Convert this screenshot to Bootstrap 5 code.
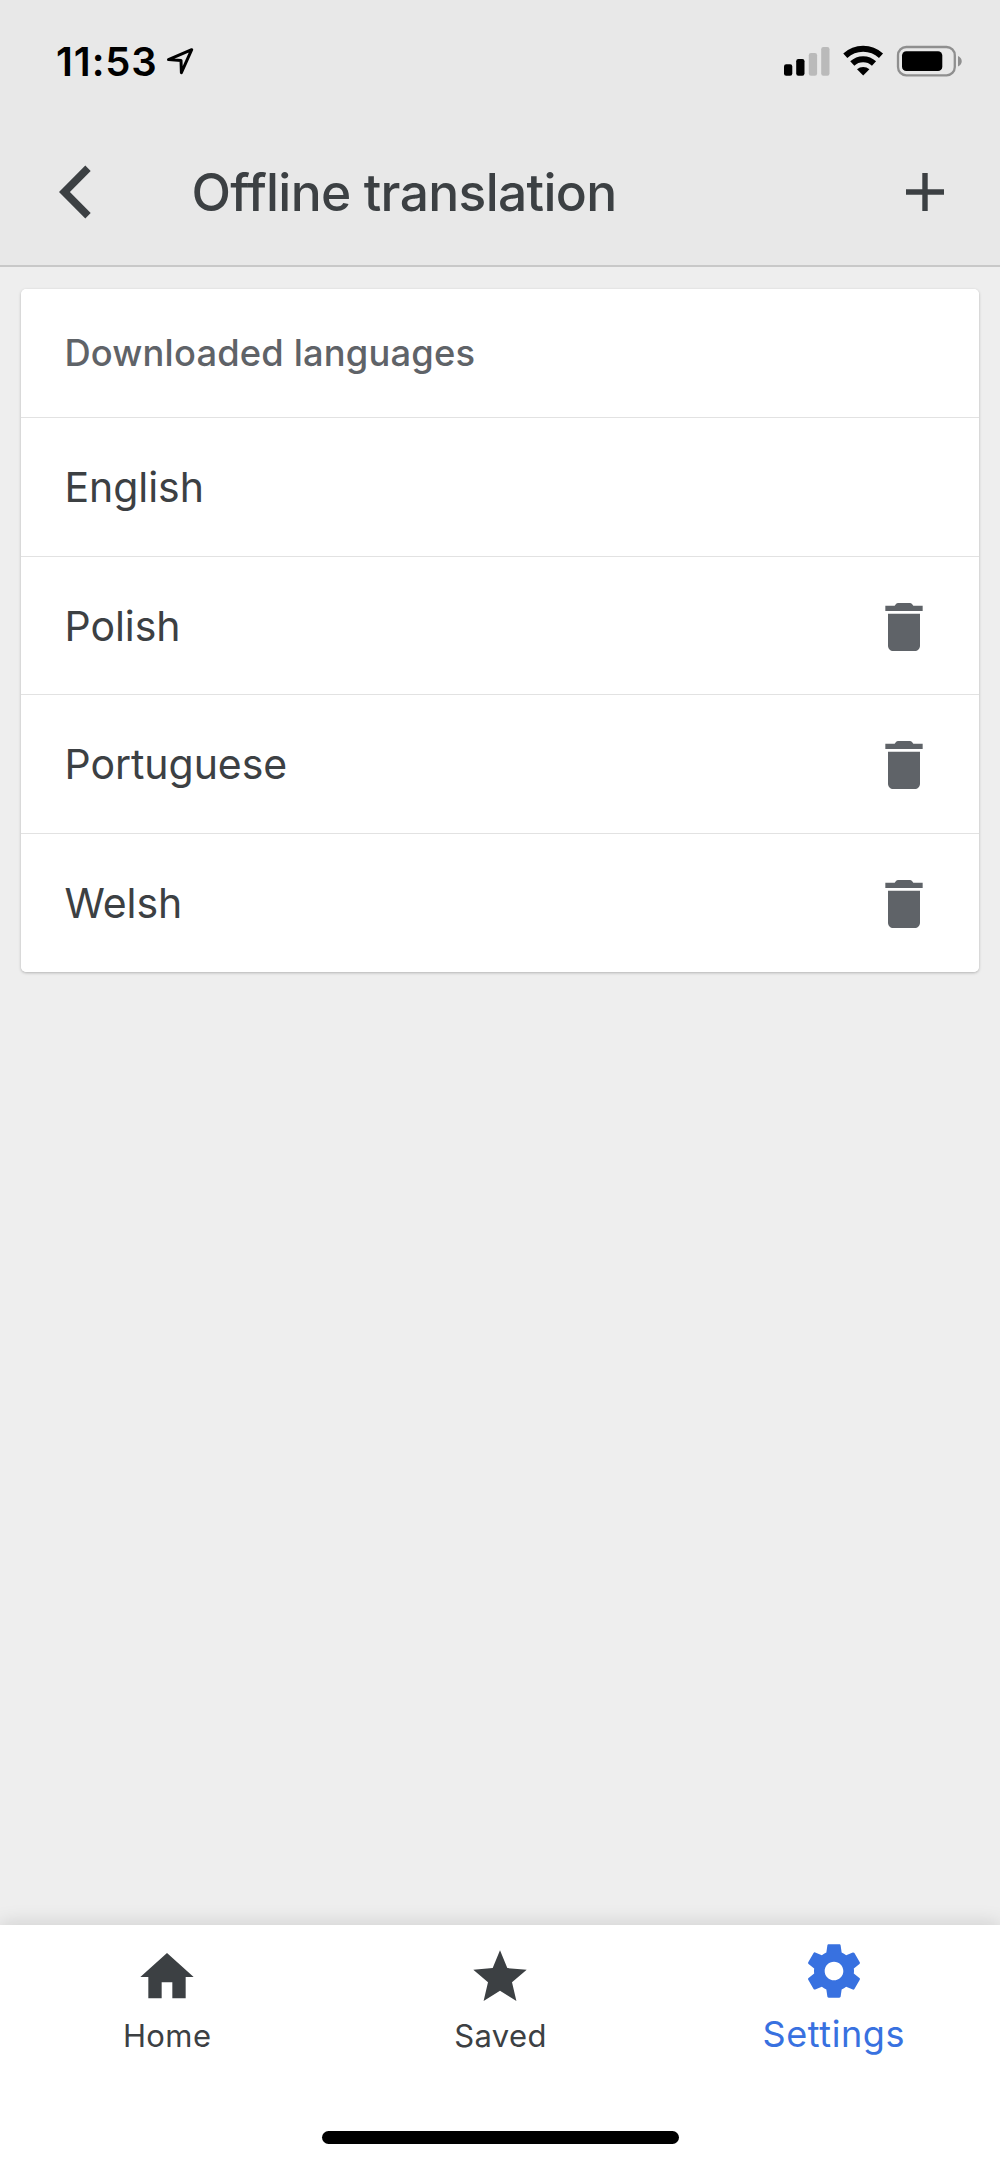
<!DOCTYPE html>
<html lang="en">
<head>
<meta charset="utf-8">
<meta name="viewport" content="width=device-width, initial-scale=1">
<title>Offline translation</title>
<link href="https://cdn.jsdelivr.net/npm/bootstrap@5.3.0/dist/css/bootstrap.min.css" rel="stylesheet">
<style>
  body { font-family: Inter, "Liberation Sans", sans-serif; background: #eee; color: #3c4043; height: 2165px; overflow: hidden; line-height: 1.2; }
  svg { display: block; flex: none; }
  .top-area { background: #e8e8e8; border-bottom: 2px solid #c8c8c8; height: 267px; }
  .status-bar { height: 119px; padding: 3px 37px 0 56px; color: #000; }
  .clock { font-size: 40px; font-weight: 600; letter-spacing: .9px; padding-top: 2px; }
  .loc { margin-left: 7.5px; }
  .title-bar { height: 146px; padding: 0 56px 0 59px; }
  .page-title { font-size: 51.5px; font-weight: 500; margin-left: 100.5px; letter-spacing: -.65px; padding-top: 2px; }
  .lang-card { margin: 22px 21px 0; border: 0; border-radius: 5px; box-shadow: 0 1px 3px rgba(0,0,0,.25); }
  .lang-card .list-group-item { height: 138.5px; padding: 2px 43px 0 43.5px; border-color: #e2e2e2; color: #3c4043; font-size: 41px; letter-spacing: -.05px; }
  .lang-card .list-head { height: 129.3px; padding: 2px 43.5px 0; font-size: 36.3px; font-weight: 500; color: #5f6368; letter-spacing: .17px; }
  .tab-bar { height: 240px; background: #fff; box-shadow: 0 -2px 18px rgba(0,0,0,.13); }
  .tab-bar .nav-link { color: #3c4043; font-size: 31px; padding: 20px 0 0 1px; height: 190px; gap: 8px; letter-spacing: .4px; }
  .tab-bar .nav-link.active { color: #3871e0; font-size: 36px; padding-top: 14px; gap: 10px; letter-spacing: .6px; }
  .home-bar { width: 357px; height: 13px; border-radius: 7px; background: #000; margin-top: 16px; }
</style>
</head>
<body class="d-flex flex-column">
<header class="top-area">
  <div class="status-bar d-flex align-items-center">
    <span class="clock">11:53</span>
    <svg class="loc" width="30" height="30" viewBox="165 46 30 30"><path d="M168.5 59.6 191.7 49.7 181.4 72.6 181 60.4Z" fill="none" stroke="#000" stroke-width="3" stroke-linejoin="round"/></svg>
    <svg class="ms-auto" width="180" height="34" viewBox="783 44 180 34">
      <g><rect x="784" y="64.3" width="8.3" height="11.4" rx="2.2"/><rect x="796.2" y="59" width="8.3" height="16.7" rx="2.2"/></g>
      <g fill="#bababa"><rect x="808.8" y="53" width="8.3" height="22.7" rx="2.2"/><rect x="821.2" y="47" width="8.3" height="28.7" rx="2.2"/></g>
      <g fill="none" stroke="#000" stroke-width="6"><path d="M845.3 55.8A26.3 26.3 0 0 1 881 55.8"/><path d="M852.3 63.5A15.8 15.8 0 0 1 874 63.5"/></g>
      <path d="M857 69.3A9.3 9.3 0 0 1 869.4 69.3L863.2 75.6Z"/>
      <rect x="898" y="47" width="56.8" height="28.3" rx="8.3" fill="none" stroke="#8f8f8f" stroke-width="2.3"/>
      <rect x="902" y="51.3" width="40.3" height="19.8" rx="4.3"/>
      <path d="M958 56c5 2 5 8.5 0 10.5z" fill="#8f8f8f"/>
    </svg>
  </div>
  <div class="title-bar d-flex align-items-center">
    <svg width="32" height="54" viewBox="59 165 32 54"><path d="M85.3 165.5 90.7 171 69.9 192 90.7 213 85.3 218.5 59 192Z" fill="#3c4043"/></svg>
    <h1 class="page-title mb-0">Offline translation</h1>
    <svg class="ms-auto" width="38" height="38" viewBox="0 0 38 38"><path d="M16.3 0h5.4v16.3h16.3v5.4h-16.3v16.3h-5.4v-16.3h-16.3v-5.4h16.3z" fill="#3c4043"/></svg>
  </div>
</header>
<main class="flex-grow-1">
  <div class="card lang-card">
    <ul class="list-group list-group-flush rounded">
      <li class="list-group-item list-head d-flex align-items-center"><span>Downloaded languages</span></li>
      <li class="list-group-item d-flex align-items-center"><span>English</span></li>
      <li class="list-group-item d-flex align-items-center justify-content-between"><span>Polish</span>
        <svg width="64" height="64" viewBox="0 0 24 24" fill="#5f6368"><path d="M6 19c0 1.1.9 2 2 2h8c1.1 0 2-.9 2-2V7H6zM19 4h-3.5l-.5-.6q-.3-.4-.8-.4H9.8q-.5 0-.8.4L8.5 4H5v2h14z"/></svg></li>
      <li class="list-group-item d-flex align-items-center justify-content-between"><span>Portuguese</span>
        <svg width="64" height="64" viewBox="0 0 24 24" fill="#5f6368"><path d="M6 19c0 1.1.9 2 2 2h8c1.1 0 2-.9 2-2V7H6zM19 4h-3.5l-.5-.6q-.3-.4-.8-.4H9.8q-.5 0-.8.4L8.5 4H5v2h14z"/></svg></li>
      <li class="list-group-item d-flex align-items-center justify-content-between"><span>Welsh</span>
        <svg width="64" height="64" viewBox="0 0 24 24" fill="#5f6368"><path d="M6 19c0 1.1.9 2 2 2h8c1.1 0 2-.9 2-2V7H6zM19 4h-3.5l-.5-.6q-.3-.4-.8-.4H9.8q-.5 0-.8.4L8.5 4H5v2h14z"/></svg></li>
    </ul>
  </div>
</main>
<footer class="tab-bar">
  <nav class="nav nav-fill flex-nowrap">
    <a class="nav-link col-4 d-flex flex-column align-items-center" href="#">
      <svg width="64" height="64" viewBox="0 0 24 24" fill="#3c4043"><path d="M10 20v-6h4v6h5v-8h3L12 3 2 12h3v8z"/></svg><span>Home</span></a>
    <a class="nav-link col-4 d-flex flex-column align-items-center" href="#">
      <svg width="64" height="64" viewBox="468.3 1944.7 64 64" fill="#3c4043"><path d="M500.3 1950 507.6 1967.8 527 1969.4 512.3 1982 516.7 2000.6 500.3 1990.5 483.9 2000.6 488.3 1982 473.6 1969.4 493 1967.8Z"/></svg><span>Saved</span></a>
    <a class="nav-link active col-4 d-flex flex-column align-items-center" href="#">
      <svg width="64" height="64" viewBox="0 0 24 24" fill="#3871e0"><path d="M19.43 12.98c.04-.32.07-.64.07-.98s-.03-.66-.07-.98l2.11-1.65c.19-.15.24-.42.12-.64l-2-3.46c-.12-.22-.39-.3-.61-.22l-2.49 1c-.52-.4-1.08-.73-1.69-.98l-.38-2.65C14.46 2.18 14.25 2 14 2h-4c-.25 0-.46.18-.49.42l-.38 2.65c-.61.25-1.17.59-1.69.98l-2.49-1c-.23-.09-.49 0-.61.22l-2 3.46c-.13.22-.07.49.12.64l2.11 1.65c-.04.32-.07.65-.07.98s.03.66.07.98l-2.11 1.65c-.19.15-.24.42-.12.64l2 3.46c.12.22.39.3.61.22l2.49-1c.52.4 1.08.73 1.69.98l.38 2.65c.03.24.24.42.49.42h4c.25 0 .46-.18.49-.42l.38-2.65c.61-.25 1.17-.59 1.69-.98l2.49 1c.23.09.49 0 .61-.22l2-3.46c.12-.22.07-.49-.12-.64zM12 15.5c-1.93 0-3.5-1.57-3.5-3.5s1.57-3.5 3.5-3.5 3.5 1.57 3.5 3.5-1.57 3.5-3.5 3.5z"/></svg><span>Settings</span></a>
  </nav>
  <div class="home-bar mx-auto"></div>
</footer>
<script src="https://cdn.jsdelivr.net/npm/bootstrap@5.3.0/dist/js/bootstrap.bundle.min.js"></script>
</body>
</html>
